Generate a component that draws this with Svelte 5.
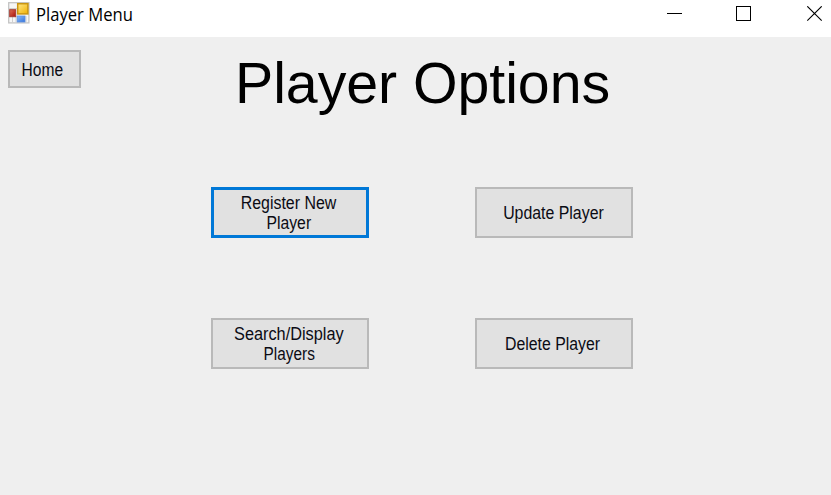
<script>
  const options = [
    { lines: [{ text: 'Register New', stretch: 0.91 }, { text: 'Player', stretch: 0.9 }], focused: true },
    { lines: [{ text: 'Update Player', stretch: 0.907 }] },
    { lines: [{ text: 'Search/Display', stretch: 0.932 }, { text: 'Players', stretch: 0.88 }] },
    { lines: [{ text: 'Delete Player', stretch: 0.905 }] }
  ];
</script>

<div class="window">
  <header>
    <svg class="logo" width="22" height="22" viewBox="0 0 22 22">
      <defs>
        <linearGradient id="gold" x1="0" y1="0" x2="1" y2="1">
          <stop offset="0" stop-color="#ffe98a" />
          <stop offset="1" stop-color="#f0b000" />
        </linearGradient>
        <linearGradient id="red" x1="0" y1="0" x2="1" y2="1">
          <stop offset="0" stop-color="#e07058" />
          <stop offset="1" stop-color="#a80f08" />
        </linearGradient>
        <linearGradient id="blue" x1="0" y1="0" x2="1" y2="1">
          <stop offset="0" stop-color="#8dbcfa" />
          <stop offset="1" stop-color="#3272dc" />
        </linearGradient>
      </defs>
      <rect x="0.7" y="0.7" width="20.2" height="20.2" fill="#f7f7f7" stroke="#c4c4c4" stroke-width="1.3" />
      <path d="M1 6.5H9M4.5 14V21M8 14V21M18 14V21" stroke="#d0d0d0" fill="none" />
      <rect x="1.7" y="7.7" width="6" height="7" fill="url(#red)" stroke="#a33a30" />
      <rect x="9.7" y="1.7" width="10.2" height="10.2" fill="url(#gold)" stroke="#c99512" stroke-width="1.5" />
      <rect x="9.2" y="14" width="7.8" height="6" fill="url(#blue)" stroke="#5d8fdf" stroke-width="0.8" />
    </svg>
    <span class="caption">Player Menu</span>
    <svg class="controls" width="157" height="16" viewBox="0 0 157 16" fill="none" stroke="#000">
      <path d="M0 7.5H15" />
      <rect x="69.5" y="0.5" width="14" height="14" />
      <path d="M140.3 0.3L154.7 14.7M154.7 0.3L140.3 14.7" stroke-width="1.1" />
    </svg>
  </header>
  <main>
    <button class="home"><span class="label" style:--stretch={0.89}>Home</span></button>
    <h1>Player Options</h1>
    <div class="grid">
      {#each options as option}
        <button class:focused={option.focused}>
          {#each option.lines as line}
            <span class="label" style:--stretch={line.stretch}>{line.text}</span>
          {/each}
        </button>
      {/each}
    </div>
  </main>
</div>

<style>
  .window {
    width: 831px;
    height: 495px;
    display: flex;
    flex-direction: column;
    overflow: hidden;
    background: #efefef;
    color: #000;
    font-family: "Liberation Sans", Arial, sans-serif;
  }
  header {
    box-sizing: border-box;
    height: 37px;
    flex: none;
    display: flex;
    align-items: flex-start;
    padding-left: 8px;
    background: #fff;
  }
  .logo {
    margin-top: 2px;
  }
  .caption {
    margin: 2px 0 0 6px;
    font: 17.5px/24px "Open Sans", "Noto Sans", sans-serif;
    white-space: nowrap;
    transform: scaleX(0.95);
    transform-origin: left;
  }
  .controls {
    margin: 6px 7px 0 auto;
  }
  main {
    flex: 1;
    display: grid;
    grid-template-columns: 73px 1fr;
    grid-template-rows: 93px 1fr;
    padding: 13px 0 0 8px;
  }
  h1 {
    margin: 0 0 0 154px;
    font-size: 57.3px;
    font-weight: 400;
    line-height: 66px;
    letter-spacing: -0.05px;
    white-space: nowrap;
  }
  button {
    box-sizing: border-box;
    display: flex;
    flex-direction: column;
    align-items: center;
    justify-content: center;
    margin: 0;
    padding: 2px 2px 0 0;
    background: #e1e1e1;
    border: 2px solid #b9b9b9;
    color: #0b0b14;
    font: 17.5px/19.5px "Liberation Sans", Arial, sans-serif;
  }
  .home {
    width: 73px;
    height: 38px;
    padding: 3px 4px 0 0;
  }
  .label {
    white-space: nowrap;
    transform: scaleX(var(--stretch));
  }
  .grid {
    grid-column: 1 / -1;
    display: grid;
    grid-template-columns: 158px 158px;
    grid-auto-rows: 51px;
    gap: 80px 106px;
    align-content: start;
    padding: 44px 0 0 203px;
  }
  .focused {
    border: 3px solid #0078d7;
  }
</style>
